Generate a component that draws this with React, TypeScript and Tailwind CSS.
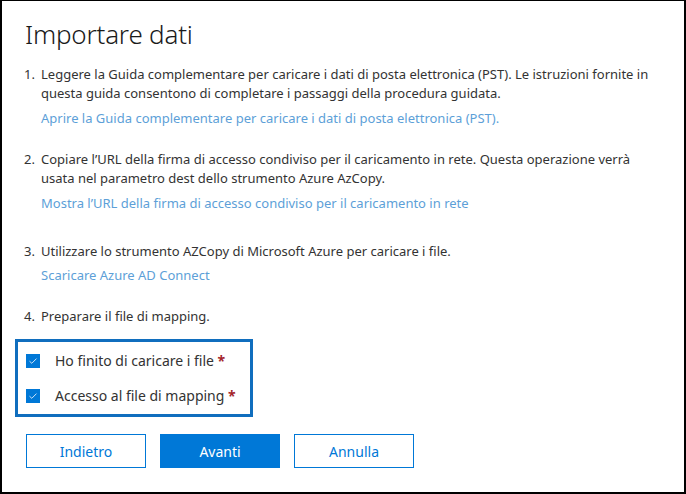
import React from "react";

const Check = () => (
  <span className="flex h-[14px] w-[14px] items-center justify-center bg-[#0078d7]">
    <svg width="10" height="8" viewBox="0 0 10 8" fill="none">
      <path d="M1.5 4.2 L3.8 6.3 L8.5 1.6" stroke="#cfe4f7" strokeWidth="1" />
    </svg>
  </span>
);

export default function App() {
  return (
    <div
      className="h-[494px] w-[686px] border-2 border-t border-black bg-white text-[#333333]"
      style={{ fontFamily: '"Noto Sans", "Open Sans", sans-serif' }}
    >
      <div className="pl-[23px] pt-[14px]">
        <h1 className="text-[26px] font-light leading-[38px] tracking-[-0.2px] text-[#1a1a1a]">Importare dati</h1>
      </div>
      <div className="pl-[22px] pt-[12px] text-[13px] leading-[19px]">
        <div className="flex">
          <span className="w-[17px]">1.</span>
          <div>
            <p className="whitespace-nowrap">
              Leggere la Guida complementare per caricare i dati di posta elettronica (PST). Le istruzioni fornite in
            </p>
            <p>questa guida consentono di completare i passaggi della procedura guidata.</p>
            <p className="mt-[6px] text-[#5d9fd8]">Aprire la Guida complementare per caricare i dati di posta elettronica (PST).</p>
          </div>
        </div>
        <div className="mt-[22px] flex">
          <span className="w-[17px]">2.</span>
          <div>
            <p className="whitespace-nowrap">
              Copiare l’URL della firma di accesso condiviso per il caricamento in rete. Questa operazione verrà
            </p>
            <p>usata nel parametro dest dello strumento Azure AzCopy.</p>
            <p className="mt-[6px] text-[#5d9fd8]">Mostra l’URL della firma di accesso condiviso per il caricamento in rete</p>
          </div>
        </div>
        <div className="mt-[29px] flex">
          <span className="w-[17px]">3.</span>
          <div>
            <p>Utilizzare lo strumento AZCopy di Microsoft Azure per caricare i file.</p>
            <p className="mt-[5px] text-[#5d9fd8]">Scaricare Azure AD Connect</p>
          </div>
        </div>
        <div className="mt-[22px] flex">
          <span className="w-[17px]">4.</span>
          <p>Preparare il file di mapping.</p>
        </div>
      </div>
      <div className="ml-[13px] mt-[13px] flex w-[238px] flex-col gap-[14px] border-[3px] border-[#106ebe] py-[8px] pl-[8px] text-[14px]">
        <label className="flex items-center gap-[15px]">
          <Check />
          <span>
            Ho finito di caricare i file <span className="font-bold text-[#a4262c]">*</span>
          </span>
        </label>
        <label className="flex items-center gap-[15px]">
          <Check />
          <span>
            Accesso al file di mapping <span className="font-bold text-[#a4262c]">*</span>
          </span>
        </label>
      </div>
      <div className="ml-[24px] mt-[17px] flex gap-[14px] text-[14px]">
        <button className="h-[34px] w-[120px] border border-[#0078d7] text-[#0078d7]">Indietro</button>
        <button className="h-[34px] w-[120px] bg-[#0078d7] text-white">Avanti</button>
        <button className="h-[34px] w-[120px] border border-[#0078d7] text-[#0078d7]">Annulla</button>
      </div>
    </div>
  );
}
